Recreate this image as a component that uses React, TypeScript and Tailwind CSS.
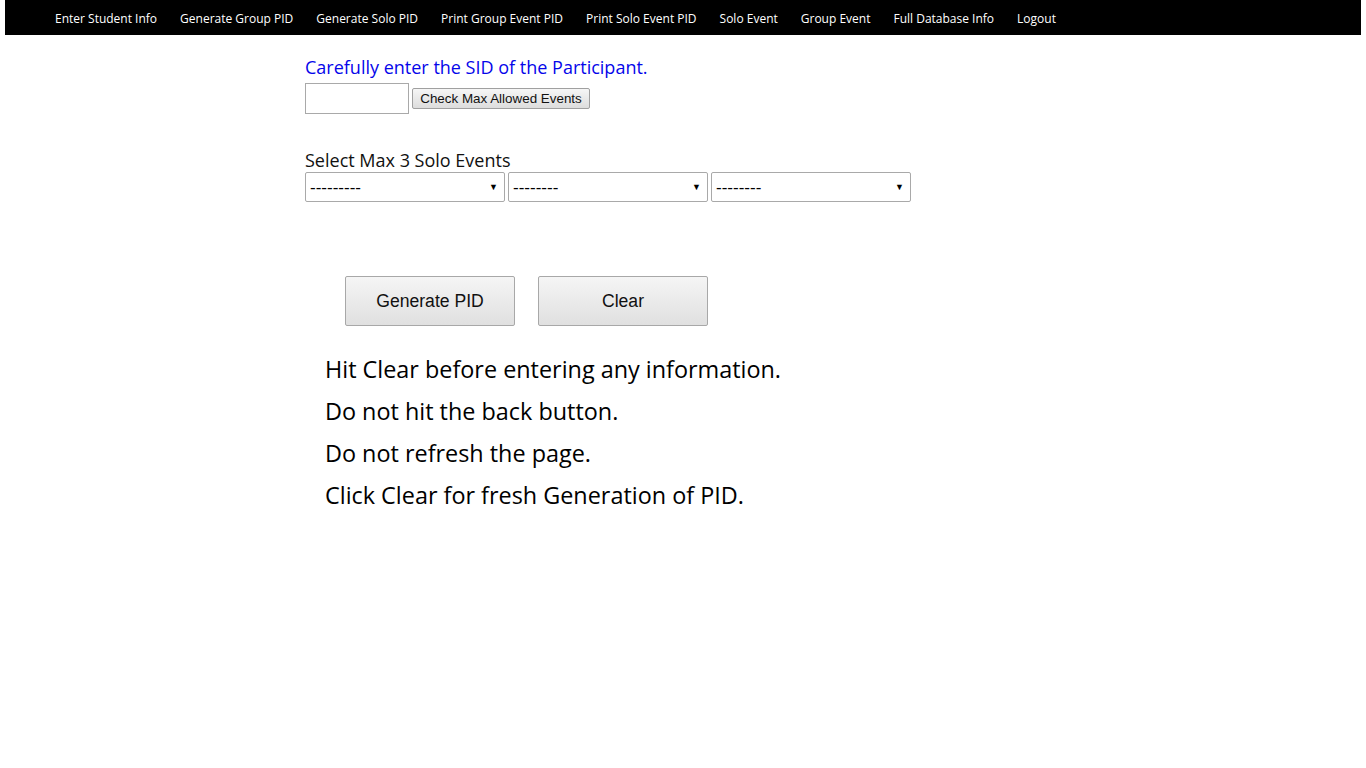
import React from "react";

const navItems = [
  "Enter Student Info",
  "Generate Group PID",
  "Generate Solo PID",
  "Print Group Event PID",
  "Print Solo Event PID",
  "Solo Event",
  "Group Event",
  "Full Database Info",
  "Logout",
];

function Select({ label }: { label: string }) {
  return (
    <div className="w-[200px] h-[30px] border border-[#a9a9a9] rounded-[2px] bg-white flex items-center justify-between pl-[4px] pr-[6px] font-['Liberation_Sans',Arial,sans-serif] text-[17px] text-black">
      <span className="leading-none">{label}</span>
      <span className="text-[9px] leading-none">▼</span>
    </div>
  );
}

export default function App() {
  return (
    <div className="min-h-[768px] bg-white font-['Open_Sans',sans-serif]">
      <div className="mx-[5px] h-[35px] bg-black flex items-center pt-[3px] pl-[50px] gap-[23px]">
        {navItems.map((n) => (
          <span key={n} className="text-white text-[12px]">
            {n}
          </span>
        ))}
      </div>
      <div className="pl-[305px] pt-[20px]">
        <div className="text-[#0505ea] text-[18px] leading-[25px]">
          Carefully enter the SID of the Participant.
        </div>
        <div className="flex items-center gap-[3px] mt-[3px]">
          <div className="w-[104px] h-[31px] border border-[#a9a9a9] bg-white" />
          <button className="w-[178px] h-[21px] pt-[1px] border border-[#a0a0a0] rounded-[2px] bg-gradient-to-b from-[#f6f6f6] to-[#dddddd] font-['Liberation_Sans',Arial,sans-serif] text-[13.4px] text-[#111] leading-none">
            Check Max Allowed Events
          </button>
        </div>
        <div className="mt-[35px] text-[18px] leading-[23px] text-[#111]">Select Max 3 Solo Events</div>
        <div className="flex gap-[3px]">
          <Select label="---------" />
          <Select label="--------" />
          <Select label="--------" />
        </div>
        <div className="flex gap-[23px] ml-[40px] mt-[74px]">
          <button className="w-[170px] h-[50px] border border-[#a8a8a8] rounded-[2px] bg-gradient-to-b from-[#f5f5f5] to-[#e0e0e0] font-['Liberation_Sans',Arial,sans-serif] text-[17.6px] text-[#111]">
            Generate PID
          </button>
          <button className="w-[170px] h-[50px] border border-[#a8a8a8] rounded-[2px] bg-gradient-to-b from-[#f5f5f5] to-[#e0e0e0] font-['Liberation_Sans',Arial,sans-serif] text-[17.6px] text-[#111]">
            Clear
          </button>
        </div>
        <div className="ml-[20px] mt-[22px] text-[23.4px] leading-[42px] text-black">
          <div>Hit Clear before entering any information.</div>
          <div>Do not hit the back button.</div>
          <div>Do not refresh the page.</div>
          <div>Click Clear for fresh Generation of PID.</div>
        </div>
      </div>
    </div>
  );
}
